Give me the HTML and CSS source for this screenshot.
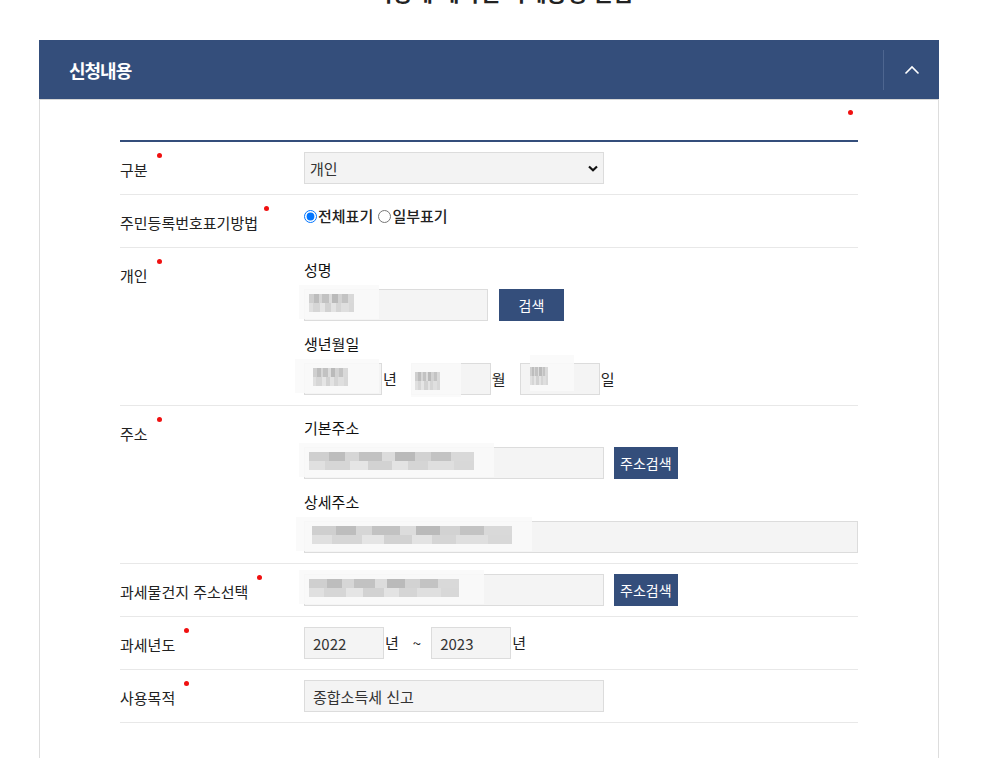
FILE: index.html
```html
<!DOCTYPE html>
<html lang="ko">
<head>
  <meta charset="UTF-8">
  <title>신청내용</title>
  <link rel="stylesheet" href="styles.css">
</head>
<body>

  <h2 class="page-title">지방세 세목별 과세증명 발급</h2>

  <section class="panel">
    <div class="panel-head">
      <h3>신청내용</h3>
      <button class="toggle" type="button" aria-label="접기">
        <svg width="16" height="10" viewBox="0 0 16 10"><path d="M1.5 8.5 L8 2 L14.5 8.5" fill="none" stroke="#fff" stroke-width="1.6"/></svg>
      </button>
    </div>

    <div class="panel-body">
      <div class="legend"><span class="req"></span></div>

      <table class="form-table">
        <tr>
          <th><span class="lbl">구분</span><span class="req"></span></th>
          <td>
            <select class="field w300">
              <option>개인</option>
            </select>
          </td>
        </tr>
        <tr>
          <th><span class="lbl">주민등록번호표기방법</span><span class="req tight"></span></th>
          <td class="radios">
            <label class="radio"><input type="radio" name="rrn" checked>전체표기</label>
            <label class="radio"><input type="radio" name="rrn">일부표기</label>
          </td>
        </tr>
        <tr>
          <th><span class="lbl">개인</span><span class="req"></span></th>
          <td>
            <div class="sub-label">성명</div>
            <div class="line">
              <div class="masked">
                <input type="text" class="field w184">
                <span class="mosaic m-name"></span>
              </div>
              <button class="btn w65" type="button">검색</button>
            </div>
            <div class="sub-label">생년월일</div>
            <div class="line date">
              <div class="masked">
                <input type="text" class="field w78">
                <span class="mosaic m-year"></span>
              </div>
              <span class="unit">년</span>
              <div class="masked">
                <input type="text" class="field w80">
                <span class="mosaic m-month"></span>
              </div>
              <span class="unit">월</span>
              <div class="masked">
                <input type="text" class="field w80">
                <span class="mosaic m-day"></span>
              </div>
              <span class="unit">일</span>
            </div>
          </td>
        </tr>
        <tr>
          <th><span class="lbl">주소</span><span class="req"></span></th>
          <td>
            <div class="sub-label">기본주소</div>
            <div class="line">
              <div class="masked">
                <input type="text" class="field w300">
                <span class="mosaic m-addr"></span>
              </div>
              <button class="btn" type="button">주소검색</button>
            </div>
            <div class="sub-label">상세주소</div>
            <div class="line">
              <div class="masked full">
                <input type="text" class="field wfull">
                <span class="mosaic m-detail"></span>
              </div>
            </div>
          </td>
        </tr>
        <tr>
          <th><span class="lbl">과세물건지 주소선택</span><span class="req"></span></th>
          <td>
            <div class="line">
              <div class="masked">
                <input type="text" class="field w300">
                <span class="mosaic m-place"></span>
              </div>
              <button class="btn" type="button">주소검색</button>
            </div>
          </td>
        </tr>
        <tr>
          <th><span class="lbl">과세년도</span><span class="req"></span></th>
          <td>
            <div class="line date">
              <input type="text" class="field w80" value="2022">
              <span class="unit">년</span>
              <span class="tilde">~</span>
              <input type="text" class="field w80" value="2023">
              <span class="unit">년</span>
            </div>
          </td>
        </tr>
        <tr>
          <th><span class="lbl">사용목적</span><span class="req"></span></th>
          <td>
            <input type="text" class="field w300" value="종합소득세 신고">
          </td>
        </tr>
      </table>
    </div>
  </section>

</body>
</html>
```

FILE: styles.css
```css
body {
  margin: 0;
  font-family: "Noto Sans CJK KR", "Noto Sans", sans-serif;
  font-size: 15px;
  color: #222;
  background: #fff;
}

.page-title {
  margin: -23px 0 0;
  height: 29px;
  line-height: 29px;
  font-size: 22px;
  font-weight: bold;
  text-align: center;
  color: #222;
}

.panel {
  width: 900px;
  margin: 34px 0 0 39px;
}

.panel-head {
  background: #344e7b;
  height: 59px;
  display: flex;
  align-items: center;
  justify-content: space-between;
  padding-left: 30px;
}

.panel-head h3 {
  margin: 0;
  color: #fff;
  font-size: 18px;
  font-weight: bold;
  letter-spacing: -1px;
}

.toggle {
  width: 56px;
  height: 40px;
  border: 0;
  border-left: 1px solid #4e6690;
  background: none;
  display: flex;
  align-items: center;
  justify-content: center;
  padding: 0;
  cursor: pointer;
}

.panel-body {
  border: 1px solid #ddd;
  border-top-color: #d6d6d6;
  border-bottom: 0;
  padding: 0 80px 36px;
}

.legend {
  height: 40px;
  text-align: right;
  padding-right: 5px;
}

.legend .req {
  margin: 10px 0 0;
}

.req {
  display: inline-block;
  width: 5px;
  height: 5px;
  border-radius: 50%;
  background: #f01010;
  vertical-align: top;
  margin: -7px 0 0 9px;
}

.req.tight {
  margin-left: 6px;
}

.form-table {
  width: 100%;
  border-collapse: collapse;
  border-top: 2px solid #344e7b;
}

.form-table th,
.form-table td {
  border-bottom: 1px solid #e8e8e8;
  vertical-align: top;
  text-align: left;
}

.form-table th {
  width: 184px;
  padding: 18px 0 0;
  font-weight: normal;
  line-height: 20px;
  color: #222;
}

.form-table td {
  padding: 10px 0;
  line-height: 22px;
}

.form-table td.radios {
  padding-bottom: 19px;
}

.field {
  box-sizing: border-box;
  height: 32px;
  border: 1px solid #dcdcdc;
  background: #f4f4f4;
  font-family: inherit;
  font-size: 15px;
  color: #333;
  padding: 0 8px;
  margin: 0;
  display: block;
}

select.field {
  appearance: none;
  padding-left: 5px;
  background: #f3f3f3 url("data:image/svg+xml,%3Csvg xmlns='http://www.w3.org/2000/svg' width='10' height='7' viewBox='0 0 10 7'%3E%3Cpath d='M1 1.5 L5 5.2 L9 1.5' fill='none' stroke='%23111' stroke-width='2.2'/%3E%3C/svg%3E") no-repeat right 5px center;
}

.w300 { width: 300px; }
.w184 { width: 184px; }
.w80 { width: 80px; }
.w78 { width: 78px; }
.wfull { width: 554px; }

.radio {
  display: inline-flex;
  align-items: center;
  font-weight: 500;
  margin-right: 1px;
}

.radio input {
  margin: 1px 1px 0 0;
  width: 13px;
  height: 13px;
}

.sub-label {
  line-height: 24px;
  margin-bottom: 7px;
  color: #111;
}

.line {
  display: flex;
  align-items: center;
  gap: 10px;
}

.line + .sub-label {
  margin-top: 11px;
}

.line.date {
  gap: 0;
}

.unit {
  margin: 0 14px 0 1px;
}

.tilde {
  margin: 0 10px 0 0;
}

.btn {
  height: 32px;
  padding: 0 6px;
  border: 0;
  background: #344e7b;
  color: #fff;
  font-family: inherit;
  font-size: 14px;
  cursor: pointer;
}

.btn.w65 {
  width: 65px;
  margin-left: 1px;
}

.masked {
  position: relative;
}

/* blurred personal data */
.mosaic {
  position: absolute;
  top: -4px;
  left: -5px;
  height: 34px;
  background: rgba(250, 250, 250, 0.9);
}

.mosaic::after {
  content: "";
  position: absolute;
  left: 10px;
  top: 9px;
  height: 18px;
  background:
    linear-gradient(90deg, #cfcfcf 0 12%, #bdbdbd 12% 22%, #d6d6d6 22% 30%, #c2c2c2 30% 44%, #dcdcdc 44% 52%, #bababa 52% 64%, #d2d2d2 64% 74%, #c3c3c3 74% 86%, #d9d9d9 86% 100%) top / 100% 50% no-repeat,
    linear-gradient(90deg, #e0e0e0 0 10%, #d6d6d6 10% 25%, #e5e5e5 25% 36%, #d2d2d2 36% 50%, #e3e3e3 50% 60%, #d5d5d5 60% 72%, #dfdfdf 72% 88%, #d8d8d8 88% 100%) bottom / 100% 50% no-repeat;
}

.m-name { width: 80px; }
.m-name::after { width: 45px; left: 10px; }
.m-year { width: 84px; left: -9px; }
.m-year::after { width: 35px; left: 18px; }
.m-month { width: 50px; left: 0; top: 0; height: 34px; }
.m-month::after { width: 25px; left: 4px; }
.m-day { width: 44px; left: 10px; top: -8px; height: 36px; }
.m-day::after { width: 18px; left: 0; top: 12px; }
.m-addr { width: 195px; }
.m-addr::after { width: 165px; }
.m-detail { width: 236px; left: -8px; }
.m-detail::after { width: 200px; left: 16px; }
.m-place { width: 185px; }
.m-place::after { width: 150px; }
```
